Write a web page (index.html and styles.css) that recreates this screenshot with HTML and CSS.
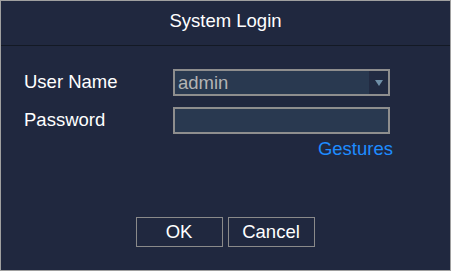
FILE: index.html
```html
<!DOCTYPE html>
<html>
<head>
<meta charset="utf-8">
<link rel="stylesheet" href="styles.css">
</head>
<body>
<div class="dialog">
  <div class="header">System Login</div>
  <div class="form">
    <div class="row">
      <div class="label">User Name</div>
      <div class="select">
        <span class="value">admin</span>
        <span class="arrow"><span class="tri"></span></span>
      </div>
    </div>
    <div class="row row2">
      <div class="label">Password</div>
      <div class="input"></div>
    </div>
    <div class="gestures">Gestures</div>
  </div>
  <div class="buttons">
    <div class="btn">OK</div>
    <div class="btn">Cancel</div>
  </div>
</div>
</body>
</html>
```
FILE: styles.css
```css
html, body {
  margin: 0;
  padding: 0;
  background: #20283f;
}
.dialog {
  width: 451px;
  height: 271px;
  box-sizing: border-box;
  border: 1px solid #a0a0a0;
  background: #20283f;
  font-family: "Liberation Sans", Arial, sans-serif;
  font-size: 18.5px;
  line-height: 20px;
  color: #ffffff;
}
.header {
  height: 45px;
  box-sizing: border-box;
  padding-top: 10px;
  text-align: center;
  border-bottom: 1px solid #131924;
}
.form {
  padding: 23px 59px 0 23px;
}
.row {
  display: flex;
  align-items: center;
  height: 27px;
}
.row2 {
  margin-top: 11px;
}
.label {
  width: 149px;
  margin-top: -1px;
}
.select, .input {
  width: 217px;
  height: 27px;
  box-sizing: border-box;
  border: 2px solid #8e8e8e;
  background: #293950;
}
.select {
  display: flex;
  align-items: center;
}
.value {
  flex: 1;
  padding-left: 3px;
  color: #b4b4b4;
}
.arrow {
  width: 19px;
  height: 100%;
  background: #222b42;
  display: flex;
  align-items: center;
  justify-content: center;
}
.tri {
  width: 0;
  height: 0;
  border-left: 4px solid transparent;
  border-right: 4px solid transparent;
  border-top: 6px solid #7090a8;
  margin-top: 1px;
}
.gestures {
  margin-top: 5px;
  margin-right: -2px;
  text-align: right;
  color: #1e8cff;
}
.buttons {
  margin-top: 58px;
  display: flex;
  justify-content: center;
  gap: 5px;
  padding-right: 1px;
}
.btn {
  width: 87px;
  height: 30px;
  box-sizing: border-box;
  border: 1px solid #8a8a8a;
  display: flex;
  align-items: center;
  justify-content: center;
}
```
